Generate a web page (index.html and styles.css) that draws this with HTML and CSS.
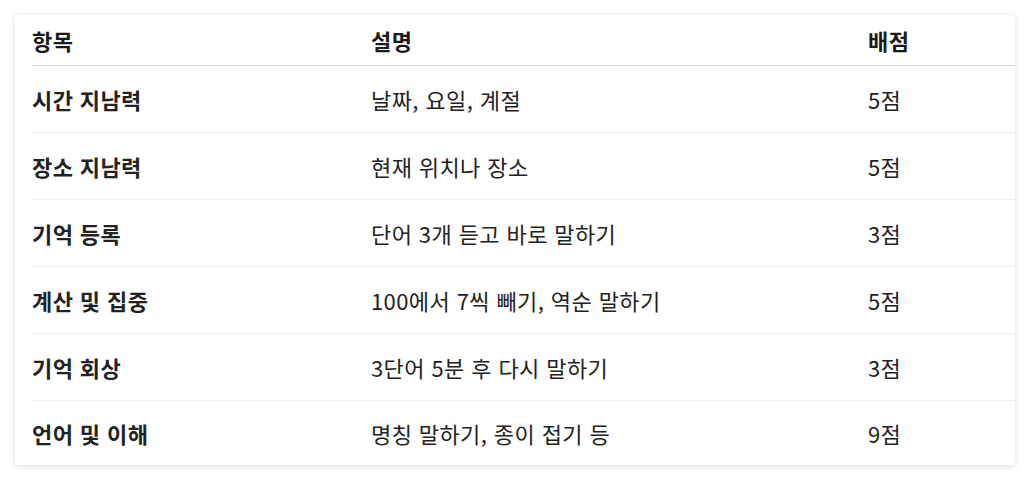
FILE: index.html
```html
<!DOCTYPE html>
<html lang="ko">

<head>
    <meta charset="UTF-8">
    <meta name="viewport" content="width=device-width, initial-scale=1.0">
    <title>인지 검사 항목</title>
    <link rel="stylesheet" href="styles.css">
</head>

<body>
    <div class="card">
        <table class="score-table">
            <colgroup>
                <col class="col-item">
                <col class="col-desc">
                <col class="col-score">
            </colgroup>
            <thead>
                <tr>
                    <th>항목</th>
                    <th>설명</th>
                    <th>배점</th>
                </tr>
            </thead>
            <tbody>
                <tr>
                    <td class="item">시간 지남력</td>
                    <td>날짜, 요일, 계절</td>
                    <td>5점</td>
                </tr>
                <tr>
                    <td class="item">장소 지남력</td>
                    <td>현재 위치나 장소</td>
                    <td>5점</td>
                </tr>
                <tr>
                    <td class="item">기억 등록</td>
                    <td>단어 3개 듣고 바로 말하기</td>
                    <td>3점</td>
                </tr>
                <tr>
                    <td class="item">계산 및 집중</td>
                    <td>100에서 7씩 빼기, 역순 말하기</td>
                    <td>5점</td>
                </tr>
                <tr>
                    <td class="item">기억 회상</td>
                    <td>3단어 5분 후 다시 말하기</td>
                    <td>3점</td>
                </tr>
                <tr>
                    <td class="item">언어 및 이해</td>
                    <td>명칭 말하기, 종이 접기 등</td>
                    <td>9점</td>
                </tr>
            </tbody>
        </table>
    </div>
</body>

</html>
```

FILE: styles.css
```css
body {
    margin: 0;
    padding: 15px;
    background: #fff;
    font-family: "Noto Sans CJK KR", "Noto Sans", sans-serif;
    color: #222;
}

.card {
    background: #fff;
    border-radius: 3px;
    box-shadow: 0 1px 6px rgba(0, 0, 0, 0.14);
    padding-left: 17px;
    overflow: hidden;
}

.score-table {
    width: 100%;
    border-collapse: collapse;
    table-layout: fixed;
    font-size: 22px;
    letter-spacing: 0.4px;
}

.col-item {
    width: 339px;
}

.col-desc {
    width: 497px;
}

th,
td {
    text-align: left;
    padding: 0;
    line-height: 28px;
}

th {
    height: 50px;
    font-weight: bold;
    color: #1a1a1a;
    border-bottom: 1px solid #d9d9d9;
}

td {
    height: 66px;
    border-bottom: 1px solid #f0f0f0;
}

tbody tr:last-child td {
    border-bottom: none;
    height: 64px;
}

.item {
    font-weight: bold;
}
```
